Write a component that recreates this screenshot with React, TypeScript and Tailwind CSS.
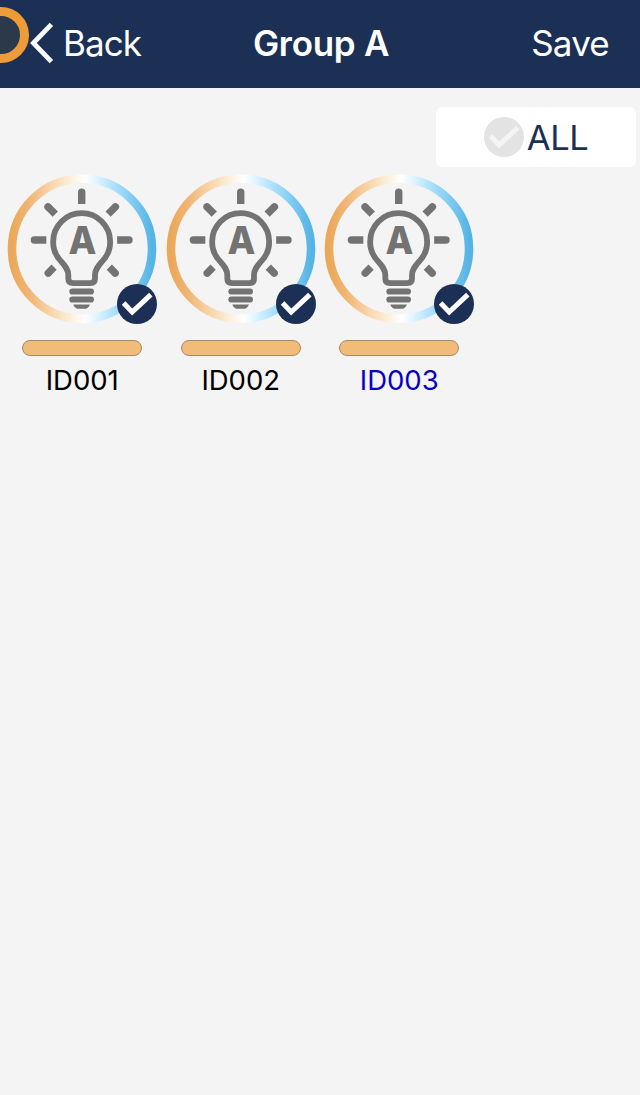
import { useState } from "react";

interface Light {
  id: string;
  selected: boolean;
  highlighted?: boolean;
}

const INITIAL_LIGHTS: Light[] = [
  { id: "ID001", selected: true },
  { id: "ID002", selected: true },
  { id: "ID003", selected: true, highlighted: true },
];

// x / y of the rounded tip, rotation and length
const RAYS = [
  { x: 74.7, y: 14.5, angle: 0, length: 15.5 },
  { x: 111, y: 30.3, angle: 45, length: 14 },
  { x: 125.7, y: 66, angle: 90, length: 15.6 },
  { x: 110.8, y: 101.7, angle: 135, length: 12 },
  { x: 38.6, y: 101.7, angle: 225, length: 12 },
  { x: 23.7, y: 66, angle: 270, length: 15.6 },
  { x: 38.4, y: 30.3, angle: 315, length: 14 },
];

function CheckBadge({ muted = false }: { muted?: boolean }) {
  return (
    <svg viewBox="0 0 40 40" className="h-10 w-10 shrink-0">
      <circle cx="20" cy="20" r="20" fill={muted ? "#e3e3e3" : "#1c2f55"} />
      <path
        d="M6.6 19 15.200 28 33.8 10.600"
        fill="none"
        stroke={muted ? "#f4f4f4" : "#ffffff"}
        strokeWidth="5"
      />
    </svg>
  );
}

function BulbIcon({ id }: { id: string }) {
  const gradient = `ring-${id}`;
  return (
    <svg viewBox="0 0 150 150" className="h-[150px] w-[150px]">
      <defs>
        <linearGradient id={gradient} x1="0" x2="1" y1="0" y2="0">
          <stop offset="0" stopColor="#eba859" />
          <stop offset="0.12" stopColor="#f0b575" />
          <stop offset="0.3" stopColor="#f9d9b1" />
          <stop offset="0.44" stopColor="#fdf3e3" />
          <stop offset="0.52" stopColor="#ffffff" />
          <stop offset="0.6" stopColor="#e0f5ff" />
          <stop offset="0.72" stopColor="#b0e2fb" />
          <stop offset="0.88" stopColor="#7ac8f0" />
          <stop offset="1" stopColor="#55b4e5" />
        </linearGradient>
      </defs>
      <circle cx="75" cy="74.7" r="70" fill="none" stroke={`url(#${gradient})`} strokeWidth="8.6" />
      <g fill="#737373">
        {RAYS.map((r) => (
          <path
            key={r.angle}
            d={`M-3.7 ${r.length}V3.7a3.7 3.7 0 0 1 7.4 0V${r.length}z`}
            transform={`translate(${r.x} ${r.y}) rotate(${r.angle})`}
          />
        ))}
        <rect x="62.3" y="114.4" width="24.7" height="6.2" rx="3.1" />
        <rect x="62.3" y="122.4" width="24.7" height="6.2" rx="3.1" />
        <path d="M66.3 130.4h16.6c-1 3-3 4.4-5.6 4.4h-5.4c-2.6 0-4.6-1.400-5.6-4.400z" />
        <text
          transform="translate(75.4 80.3) scale(0.93 1)"
          textAnchor="middle"
          className="font-['Inter',sans-serif] text-[39px] font-extrabold"
        >
          A
        </text>
      </g>
      <path
        d="M66 109.2C62.5 109.2 61.3 107.5 61.3 104.5V101C61.3 96 58.5 92.5 54.4 87.7A28.5 28.5 0 1 1 94.9 87.7C90.8 92.5 88 96 88 101V104.5C88 107.5 86.8 109.2 83.3 109.2Z"
        fill="none"
        stroke="#737373"
        strokeWidth="5.8"
      />
    </svg>
  );
}

function LightItem({ light, onToggle }: { light: Light; onToggle: () => void }) {
  return (
    <button onClick={onToggle} className="flex w-[158.5px] flex-col items-center">
      <div className="relative">
        <BulbIcon id={light.id} />
        <div className="absolute right-0 bottom-0">
          <CheckBadge muted={!light.selected} />
        </div>
      </div>
      <div className="mt-4 h-4 w-[120px] rounded-full border border-[#a58a68] bg-[#f1bb78]" />
      <span
        className={`mt-1.5 text-[27.5px] leading-9 ${
          light.highlighted ? "text-[#0a00c4]" : "text-black"
        }`}
      >
        {light.id}
      </span>
    </button>
  );
}

export default function App() {
  const [lights, setLights] = useState(INITIAL_LIGHTS);

  function toggle(id: string) {
    setLights((prev) => prev.map((l) => (l.id === id ? { ...l, selected: !l.selected } : l)));
  }

  function selectAll() {
    setLights((prev) => prev.map((l) => ({ ...l, selected: true })));
  }

  return (
    <div className="min-h-screen overflow-hidden bg-[#f4f4f4] font-['Inter',sans-serif]">
      <header className="relative grid h-[88px] grid-cols-3 items-center overflow-hidden bg-[#1c2f55] pb-0.5 text-[35px] text-white">
        <div className="absolute top-[7px] -left-[27px] h-14 w-14 rounded-full border-[9px] border-[#ee9c37] bg-[#2c394a]" />
        <button className="relative flex items-center gap-[9px] pl-[29px]">
          <svg viewBox="0 0 25 42" className="h-[42px] w-[25px]">
            <path d="M22.4 2.3 4.4 21 22.4 39.7" fill="none" stroke="#f8fcff" strokeWidth="4.8" />
          </svg>
          <span className="tracking-[-0.9px]">Back</span>
        </button>
        <h1 className="pl-0.5 text-center font-semibold tracking-[-0.3px]">Group A</h1>
        <button className="pr-[31px] text-right tracking-[-0.8px]">Save</button>
      </header>

      <main>
        <div className="flex justify-end pt-[19px] pr-1">
          <button
            onClick={selectAll}
            className="flex h-[60px] w-[200px] items-center justify-center gap-[3px] rounded-md bg-white text-[34.5px] text-[#1c2f55]"
          >
            <CheckBadge muted />
            <span className="pt-0.5 tracking-[-0.5px]">ALL</span>
          </button>
        </div>
        <div className="mt-[7px] flex pl-[3px]">
          {lights.map((l) => (
            <LightItem key={l.id} light={l} onToggle={() => toggle(l.id)} />
          ))}
        </div>
      </main>
    </div>
  );
}
